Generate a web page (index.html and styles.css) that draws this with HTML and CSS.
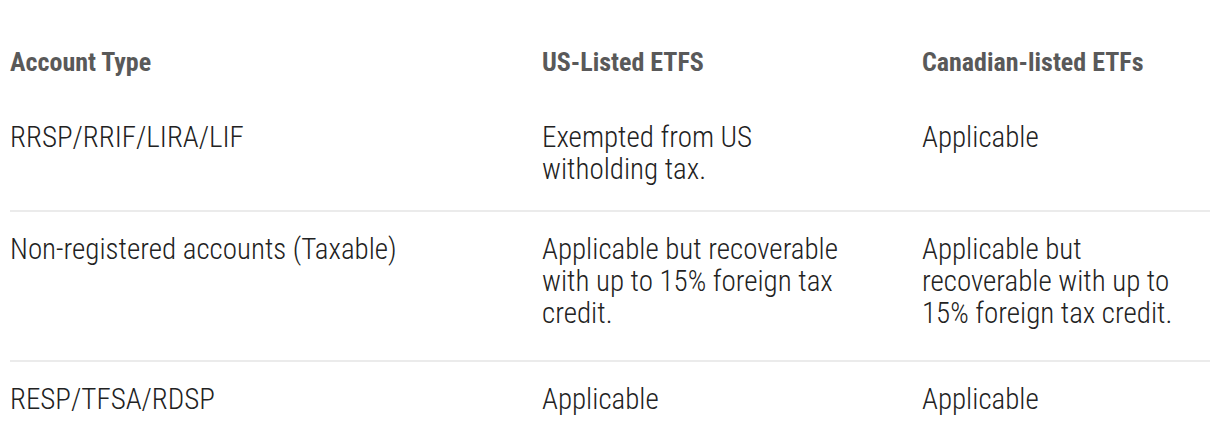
FILE: index.html
```html
<!DOCTYPE html>
<html lang="en">
<head>
<meta charset="utf-8">
<title>Withholding tax by account type</title>
<link rel="stylesheet" href="styles.css">
</head>
<body>
<table class="tax-table">
  <colgroup>
    <col class="col-type">
    <col class="col-us">
    <col class="col-ca">
  </colgroup>
  <thead>
    <tr>
      <th>Account Type</th>
      <th>US-Listed ETFS</th>
      <th>Canadian-listed ETFs</th>
    </tr>
  </thead>
  <tbody>
    <tr class="first">
      <td>RRSP/RRIF/LIRA/LIF</td>
      <td>Exempted from US<br>witholding tax.</td>
      <td>Applicable</td>
    </tr>
    <tr>
      <td>Non-registered accounts (Taxable)</td>
      <td>Applicable but recoverable with up to 15% foreign tax credit.</td>
      <td>Applicable but recoverable with up to 15% foreign tax credit.</td>
    </tr>
    <tr>
      <td>RESP/TFSA/RDSP</td>
      <td>Applicable</td>
      <td>Applicable</td>
    </tr>
  </tbody>
</table>
</body>
</html>
```

FILE: styles.css
```css
html, body {
  margin: 0;
  padding: 0;
  background: #ffffff;
}

body {
  padding: 0 10px;
  font-family: "Roboto Condensed", "Liberation Sans Narrow", "DejaVu Sans Condensed", "Roboto", sans-serif;
  font-stretch: condensed;
  color: #222222;
}

.tax-table {
  width: 1200px;
  border-collapse: collapse;
  table-layout: fixed;
}

.col-type { width: 532px; }
.col-us { width: 380px; }
.col-ca { width: 288px; }

.tax-table th {
  text-align: left;
  font-weight: 700;
  font-size: 26px;
  line-height: 30px;
  color: #595959;
  padding: 47px 0 23px 0;
  vertical-align: top;
}

.tax-table td {
  font-size: 29px;
  font-weight: 300;
  line-height: 32px;
  vertical-align: top;
  padding: 21px 20px 31px 0;
}

.tax-table td:nth-child(2) {
  padding-right: 60px;
}

.tax-table tbody tr {
  border-top: 2px solid #ebebeb;
}

.tax-table tbody tr.first {
  border-top: 0;
}

.tax-table tbody tr.first td {
  padding-bottom: 25px;
}
```
